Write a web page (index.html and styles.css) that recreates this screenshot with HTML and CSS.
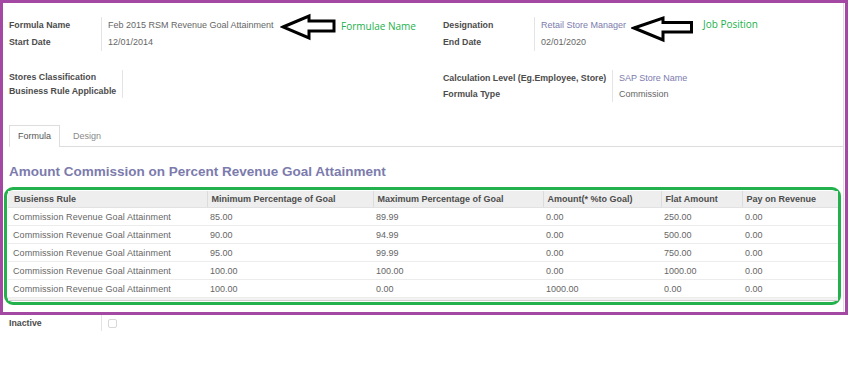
FILE: index.html
```html
<!DOCTYPE html>
<html lang="en">
<head>
    <meta charset="UTF-8">
    <title>Formula - Feb 2015 RSM Revenue Goal Attainment</title>
    <link rel="stylesheet" href="styles.css">
</head>
<body>

<div class="page">
    <div class="frame">
        <div class="sheet">
            <div class="groups">
                <div class="group-col">
                    <table class="group g1">
                        <tr><td class="label lw-92">Formula Name</td><td class="value">Feb 2015 RSM Revenue Goal Attainment</td></tr>
                        <tr><td class="label">Start Date</td><td class="value">12/01/2014</td></tr>
                    </table>
                    <table class="group g2 short">
                        <tr><td class="label lw-113">Stores Classification</td><td class="value"></td></tr>
                        <tr><td class="label">Business Rule Applicable</td><td class="value"></td></tr>
                    </table>
                </div>
                <div class="group-col">
                    <table class="group g1">
                        <tr><td class="label lw-91">Designation</td><td class="value"><span class="link">Retail Store Manager</span></td></tr>
                        <tr><td class="label">End Date</td><td class="value">02/01/2020</td></tr>
                    </table>
                    <table class="group g2 tall">
                        <tr><td class="label lw-169">Calculation Level (Eg.Employee, Store)</td><td class="value"><span class="link">SAP Store Name</span></td></tr>
                        <tr><td class="label">Formula Type</td><td class="value">Commission</td></tr>
                    </table>
                </div>
            </div>

            <div class="tabs">
                <a class="tab active" href="javascript:void(0);">Formula</a>
                <a class="tab" href="javascript:void(0);">Design</a>
            </div>

            <h2 class="title">Amount Commission on Percent Revenue Goal Attainment</h2>

            <div class="highlight">
                <table class="rules">
                    <colgroup>
                        <col style="width: 199px">
                        <col style="width: 166px">
                        <col style="width: 170px">
                        <col style="width: 118px">
                        <col style="width: 81px">
                        <col style="width: 96px">
                    </colgroup>
                    <thead>
                        <tr>
                            <th>Busienss Rule</th>
                            <th>Minimum Percentage of Goal</th>
                            <th>Maximum Percentage of Goal</th>
                            <th>Amount(* %to Goal)</th>
                            <th>Flat Amount</th>
                            <th>Pay on Revenue</th>
                        </tr>
                    </thead>
                    <tbody>
                        <tr><td>Commission Revenue Goal Attainment</td><td>85.00</td><td>89.99</td><td>0.00</td><td>250.00</td><td>0.00</td></tr>
                        <tr><td>Commission Revenue Goal Attainment</td><td>90.00</td><td>94.99</td><td>0.00</td><td>500.00</td><td>0.00</td></tr>
                        <tr><td>Commission Revenue Goal Attainment</td><td>95.00</td><td>99.99</td><td>0.00</td><td>750.00</td><td>0.00</td></tr>
                        <tr><td>Commission Revenue Goal Attainment</td><td>100.00</td><td>100.00</td><td>0.00</td><td>1000.00</td><td>0.00</td></tr>
                        <tr><td>Commission Revenue Goal Attainment</td><td>100.00</td><td>0.00</td><td>1000.00</td><td>0.00</td><td>0.00</td></tr>
                    </tbody>
                    <tfoot>
                        <tr><td colspan="6"></td></tr>
                    </tfoot>
                </table>
            </div>
        </div>
    </div>

    <table class="group after">
        <tr><td class="label lw-92">Inactive</td><td class="value"><span class="checkbox"></span></td></tr>
    </table>

    <!-- annotations drawn over the screenshot -->
    <svg class="arrow arrow-name" width="58" height="28" viewBox="0 0 58 28">
        <polygon points="3,14 29,3 29,8 54,8 54,18 29,18 29,25" />
    </svg>
    <span class="note note-name">Formulae Name</span>

    <svg class="arrow arrow-job" width="64" height="28" viewBox="0 0 64 28">
        <polygon points="3,13 32,3 32,7.5 60.5,7.5 60.5,17 32,17 32,25" />
    </svg>
    <span class="note note-job">Job Position</span>
</div>

</body>
</html>
```

FILE: styles.css
```css
body {
    margin: 0;
    padding: 0;
    background-color: #ffffff;
    font-family: "Liberation Sans", Arial, sans-serif;
    font-size: 9px;
    color: #666666;
}

.page {
    position: relative;
    width: 850px;
    height: 366px;
}

.frame {
    width: 848px;
    height: 315px;
    box-sizing: border-box;
    border: 3px solid #a349a4;
}

.sheet {
    height: 100%;
    box-sizing: border-box;
    border-right: 1px solid #dddddd;
    margin-right: 1px;
    padding-top: 14px;
}

.groups {
    display: flex;
    align-items: flex-start;
}

.group-col:first-child {
    width: 440px;
    box-sizing: border-box;
    padding-left: 6px;
}

.group {
    border-collapse: collapse;
}

.group td {
    padding: 0;
    height: 17px;
    line-height: 17px;
    white-space: nowrap;
    vertical-align: middle;
}

.group.g2 {
    margin-top: 19px;
}

.group.short td {
    height: 14px;
    line-height: 14px;
}

.group.tall td {
    height: 16px;
    line-height: 16px;
}

.group.tall .value {
    vertical-align: bottom;
}

.label {
    font-size: 8.8px;
    font-weight: bold;
    color: #4c4c4c;
}

.value {
    border-left: 1px solid #e4e4e4;
    padding-left: 6px !important;
}

.lw-91 { width: 91px; }
.lw-92 { width: 92px; }
.lw-113 { width: 113px; }
.lw-169 { width: 169px; }

.link {
    color: #7c7bad;
}

.tabs {
    display: flex;
    margin: 23px 0 0 6px;
    border-bottom: 1px solid #dddddd;
}

.tab {
    display: block;
    padding: 0 8px;
    margin-right: 4px;
    line-height: 20px;
    border: 1px solid transparent;
    border-bottom: none;
    color: #8a8a8a;
    text-decoration: none;
}

.tab.active {
    color: #555555;
    background-color: #ffffff;
    border-color: #dddddd;
    margin-bottom: -1px;
    padding-bottom: 1px;
}

.title {
    margin: 17px 0 0 6px;
    font-size: 13.5px;
    line-height: 16px;
    font-weight: bold;
    color: #7c7bad;
}

.highlight {
    margin: 7px 2px 0 1px;
    padding: 1px;
    border: 3px solid #22b14c;
    border-radius: 9px;
}

.rules {
    width: 830px;
    table-layout: fixed;
    border-collapse: collapse;
}

.rules th {
    height: 16px;
    padding: 0 4px;
    text-align: left;
    font-weight: bold;
    color: #4c4c4c;
    background-color: #eeeeee;
    border-left: 1px solid #dcdcdc;
    border-bottom: 1px solid #e2e2e2;
    white-space: nowrap;
    overflow: hidden;
}

.rules th:first-child {
    border-left: none;
    padding-left: 6px;
}

.rules td {
    height: 17px;
    padding: 0 3px;
    color: #666666;
    border-bottom: 1px solid #ececec;
    white-space: nowrap;
    overflow: hidden;
}

.rules tbody td:first-child {
    padding-left: 5px;
    letter-spacing: 0.1px;
}

.rules tfoot td {
    height: 2px;
    padding: 0;
    background-color: #f2f2f2;
    border-bottom: 1px solid #cfcfcf;
}

.group.after {
    margin-left: 9px;
}

.group.after td {
    height: 16px;
    line-height: 16px;
}

.checkbox {
    display: inline-block;
    width: 7px;
    height: 7px;
    border: 1px solid #d8d8d8;
    border-radius: 2px;
    vertical-align: middle;
}

.arrow {
    position: absolute;
}

.arrow polygon {
    fill: none;
    stroke: #000000;
    stroke-width: 3;
    stroke-linejoin: miter;
}

.arrow-name {
    left: 280px;
    top: 13px;
}

.arrow-job {
    left: 631px;
    top: 15px;
}

.note {
    position: absolute;
    font-family: "Open Sans", sans-serif;
    font-size: 10px;
    line-height: 14px;
    color: #22b14c;
}

.note-name {
    left: 341px;
    top: 19px;
}

.note-job {
    left: 703px;
    top: 17px;
}
```
